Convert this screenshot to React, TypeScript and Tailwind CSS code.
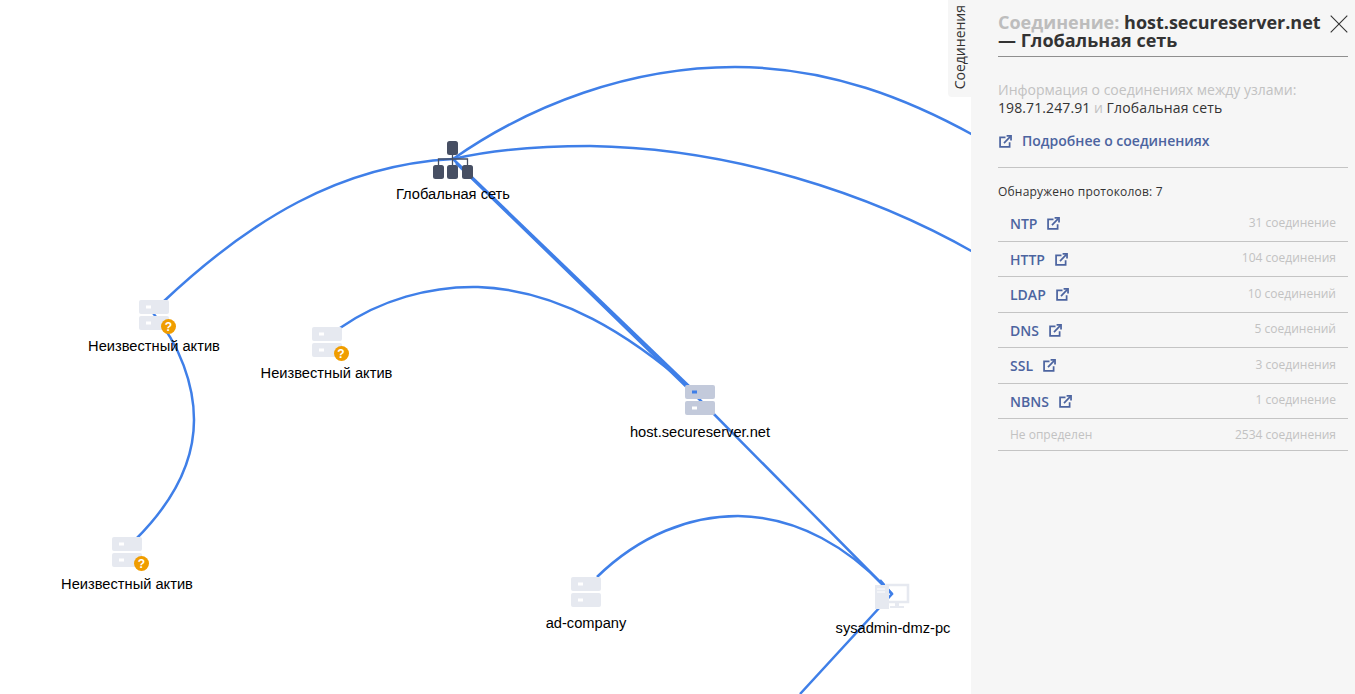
const protocols = [
  { name: "NTP", count: "31 соединение" },
  { name: "HTTP", count: "104 соединения" },
  { name: "LDAP", count: "10 соединений" },
  { name: "DNS", count: "5 соединений" },
  { name: "SSL", count: "3 соединения" },
  { name: "NBNS", count: "1 соединение" },
];

const edges = [
  "M453 159 C 530 105, 630 67, 735 67 C 830 67, 910 100, 975 136",
  "M453 159 C 500 148, 550 146, 590 146 C 730 148, 870 193, 975 253",
  "M453 159 C 340 165, 250 220, 163 302",
  "M153 313 C 180 345, 194 385, 194 420 C 194 465, 170 505, 136 539",
  "M340 328 C 380 300, 430 286, 478 287 C 560 290, 630 335, 692 389",
  "M453 159 L 692 389",
  "M456 163 L 700 400 L 892 594",
  "M597 577 C 640 535, 690 516, 738 516 C 800 517, 850 550, 885 587",
  "M880 580 L 892 594 L 800 694",
];

function LinkIcon({ className }: { className: string }) {
  return (
    <svg viewBox="0 0 12 12" fill="none" stroke="#4c64a0" strokeWidth="1.6" className={className}>
      <path d="M6 2.2H1v8.8h8.8V6.6" />
      <path d="M4.6 7.4 10.4 1.6" />
      <path d="M7 .9h4.1V5" />
    </svg>
  );
}

function Server({ tone, dot }: { tone: string; dot?: string }) {
  return (
    <svg viewBox="0 0 30 30" className="h-[30px] w-[30px]">
      <rect x="0" y="0" width="30" height="14" rx="2" fill={tone} />
      <rect x="0" y="16" width="30" height="14" rx="2" fill={tone} />
      <rect x="7" y="5.5" width="5" height="3" fill={dot ?? "#fff"} />
      <rect x="7" y="21.5" width="5" height="3" fill="#fff" />
    </svg>
  );
}

function Question() {
  return (
    <span className="absolute left-[22px] top-[19px] flex h-[15px] w-[15px] items-center justify-center rounded-full bg-[#f09d00] font-['Liberation_Sans',sans-serif] text-[12px] font-bold leading-none text-white">
      ?
    </span>
  );
}

function ServerNode({
  x,
  y,
  label,
  unknown,
  tone = "#e6e9f0",
  dot,
  gap = "mt-[8px]",
}: {
  x: number;
  y: number;
  label: string;
  unknown?: boolean;
  tone?: string;
  dot?: string;
  gap?: string;
}) {
  return (
    <div className="absolute flex w-[200px] flex-col items-center" style={{ left: x - 100, top: y }}>
      <div className="relative h-[30px] w-[30px]">
        <Server tone={tone} dot={dot} />
        {unknown && <Question />}
      </div>
      <div className={`${gap} text-[14.67px] leading-[16px] text-black`}>{label}</div>
    </div>
  );
}

export default function App() {
  return (
    <div className="relative flex h-[694px] w-[1355px] overflow-hidden bg-white font-['Liberation_Sans',sans-serif]">
      <div className="relative h-full flex-1">
        <svg width="984" height="694" fill="none" stroke="#3f7fe8" strokeWidth="2.5" className="absolute left-0 top-0">
          {edges.map((d) => (
            <path key={d} d={d} />
          ))}
        </svg>

        {/* Глобальная сеть */}
        <div className="absolute left-[353px] top-[141px] flex w-[200px] flex-col items-center">
          <svg viewBox="0 0 40 38" className="h-[38px] w-[40px]">
            <rect x="14" y="0" width="11" height="14" rx="2.5" fill="#474f63" />
            <path d="M19.5 14v10M5.5 24v-6h29v6" fill="none" stroke="#474f63" strokeWidth="1.3" />
            <rect x="0" y="24" width="11" height="14" rx="2.5" fill="#474f63" />
            <rect x="14" y="24" width="11" height="14" rx="2.5" fill="#474f63" />
            <rect x="29" y="24" width="11" height="14" rx="2.5" fill="#474f63" />
          </svg>
          <div className="mt-[7px] text-[14.67px] leading-[16px] text-black">Глобальная сеть</div>
        </div>

        <ServerNode x={154} y={300} label="Неизвестный актив" unknown />
        <ServerNode x={326.5} y={327} label="Неизвестный актив" unknown />
        <ServerNode x={127} y={537} label="Неизвестный актив" unknown gap="mt-[9px]" />
        <ServerNode x={700} y={385} label="host.secureserver.net" tone="#c3cadb" dot="#3f7fe8" gap="mt-[9px]" />
        <ServerNode x={586} y={577} label="ad-company" />

        <div className="absolute left-[793px] top-[583px] flex w-[200px] flex-col items-center">
          <svg viewBox="0 0 36 26" className="h-[26px] w-[36px] -translate-x-px">
            <path d="M11 2h23v17H11" fill="none" stroke="#e6e9f0" strokeWidth="2.6" />
            <path d="M21 19h4v4h-4zM16 23h14v2H16z" fill="#e6e9f0" />
            <rect x="1" y="2" width="14" height="24" fill="#e6e9f0" />
            <path d="M3 6h8M3 9h8" stroke="#fff" strokeWidth="1" />
          </svg>
          <div className="mt-[11px] text-[14.67px] leading-[16px] text-black">sysadmin-dmz-pc</div>
        </div>

        <div className="absolute right-0 top-0 flex h-[97px] w-[23px] items-center justify-center rounded-bl-[4px] bg-[#f6f6f6] pb-[2px] pl-px">
          <span className="rotate-180 font-['Open_Sans',sans-serif] text-[14px] leading-none text-[#333] [writing-mode:vertical-rl]">
            Соединения
          </span>
        </div>
      </div>

      <aside className="relative z-10 h-full w-[384px] shrink-0 bg-[#f6f6f6] pl-[27px] pr-[7px] font-['Open_Sans',sans-serif]">
        <h2 className="mt-[13px] border-b border-[#8f8f8f] pb-[7px] text-[18px] font-bold leading-[18px] text-[#333]">
          <span className="text-[#bdbdbd]">Соединение:</span> host.secureserver.net
          <br />— Глобальная сеть
        </h2>

        <p className="mt-[24px] text-[14px] leading-[18px] text-[#c2c2c2]">
          Информация о соединениях между узлами:
          <br />
          <span className="font-medium tracking-[0.1px] text-[#333]">198.71.247.91</span> и{" "}
          <span className="font-medium tracking-[0.15px] text-[#333]">Глобальная сеть</span>
        </p>

        <a className="mt-[14px] flex items-center gap-[10px] pl-px text-[14px] font-semibold leading-[20px] text-[#4c64a0]">
          <LinkIcon className="h-[13px] w-[13px]" />
          Подробнее о соединениях
        </a>

        <div className="mt-[16px] border-t border-[#c4c4c4] pt-[16px] text-[12px] font-medium leading-[16px] tracking-[0.2px] text-[#333]">
          Обнаружено протоколов: 7
        </div>

        <ul className="mt-[6px]">
          {protocols.map((p) => (
            <li key={p.name} className="flex h-[35.5px] items-center justify-between border-b border-[#c4c4c4] pl-[12px] pr-[12px]">
              <span className="flex items-center gap-[10px] pt-px text-[14px] font-semibold text-[#4c64a0]">
                {p.name}
                <LinkIcon className="h-[13px] w-[13px]" />
              </span>
              <span className="pb-px text-[12px] text-[#c2c2c2]">{p.count}</span>
            </li>
          ))}
          <li className="flex h-[32px] items-center justify-between border-b border-[#c4c4c4] pl-[12px] pr-[12px] text-[12px] text-[#c2c2c2]">
            <span>Не определен</span>
            <span>2534 соединения</span>
          </li>
        </ul>

        <button className="absolute right-[7px] top-[15px]">
          <svg viewBox="0 0 18 18" className="h-[18px] w-[18px]" stroke="#333" strokeWidth="1.1">
            <path d="M.7.7l16.6 16.6M17.3.7.7 17.3" />
          </svg>
        </button>
      </aside>
    </div>
  );
}
